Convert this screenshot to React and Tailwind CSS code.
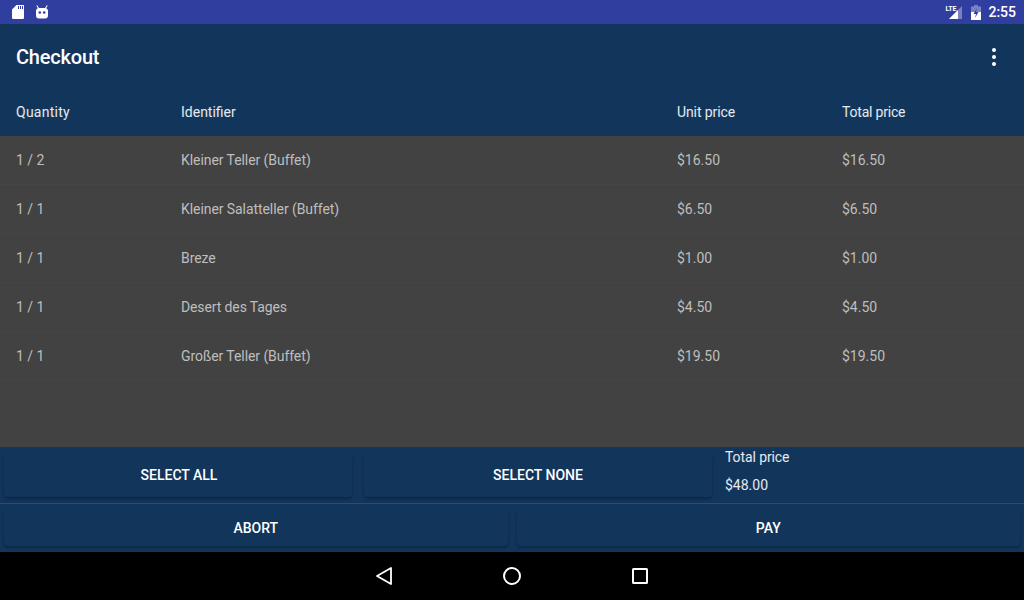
import React from "react";

const rows = [
  { qty: "1 / 2", name: "Kleiner Teller (Buffet)", unit: "$16.50", total: "$16.50" },
  { qty: "1 / 1", name: "Kleiner Salatteller (Buffet)", unit: "$6.50", total: "$6.50" },
  { qty: "1 / 1", name: "Breze", unit: "$1.00", total: "$1.00" },
  { qty: "1 / 1", name: <span className="tracking-[-0.12px]">Desert des Tages</span>, unit: "$4.50", total: "$4.50" },
  { qty: "1 / 1", name: "Großer Teller (Buffet)", unit: "$19.50", total: "$19.50" },
];

const Row = ({ cells, className }) => (
  <div className={`flex items-center pl-4 ${className}`}>
    <div className="w-[165px]">{cells[0]}</div>
    <div className="w-[496px]">{cells[1]}</div>
    <div className="w-[165px]">{cells[2]}</div>
    <div className="flex-1">{cells[3]}</div>
  </div>
);

const FlatButton = ({ label, className }) => (
  <button
    type="button"
    className={`flex h-full items-center justify-center rounded-sm bg-[#12355b] text-sm font-medium text-white shadow-[0_2px_3px_rgba(0,0,0,0.25)] ${className}`}
  >
    {label}
  </button>
);

const StatusBar = () => (
  <div className="flex h-6 items-center justify-between bg-[#303f9f] pl-3 pr-2 text-white">
    <div className="flex items-center gap-[12px]">
      <svg width="12" height="14" viewBox="0 0 12 14" fill="#fff">
        <path d="M4.5 0H10.5A1.2 1.2 0 0 1 12 1.3V12.7A1.2 1.2 0 0 1 10.8 14H1.2A1.2 1.2 0 0 1 0 12.7V4.5ZM6 1V4H7V1ZM8 1V4H9V1ZM10 1V4H11V1Z" fillRule="evenodd" />
      </svg>
      <svg width="12" height="14" viewBox="0 0 12 14" fill="#fff">
        <path d="M1 0L3 3H9L11 0L11.6 .5L10.2 3.2A3 3 0 0 1 12 6V10.5A3 3 0 0 1 9 13.5H3A3 3 0 0 1 0 10.5V6A3 3 0 0 1 1.8 3.2L.4 .5Z" />
        <circle cx="3.8" cy="7.5" r="1.3" fill="#303f9f" />
        <circle cx="8.2" cy="7.5" r="1.3" fill="#303f9f" />
      </svg>
    </div>
    <div className="flex items-center">
      <div className="relative h-[15px] w-[17px]">
        <span className="absolute left-0 top-0 text-[7px] font-bold leading-[8px] tracking-[-0.2px]">LTE</span>
        <svg className="absolute bottom-[1px] left-[4px]" width="13" height="13" viewBox="0 0 13 13">
          <path d="M13 0V13H0Z" fill="#fff" fillOpacity="0.35" />
          <path d="M9 4V13H0Z" fill="#fff" />
        </svg>
      </div>
      <svg className="ml-[9px]" width="10" height="15" viewBox="0 0 10 15">
        <path d="M3 0H7V1.5H10V15H0V1.5H3Z" fill="#fff" fillOpacity="0.35" />
        <path d="M0 7H10V15H0Z" fill="#fff" />
        <path d="M6 3L2.5 9H5L4 13L7.5 7H5Z" fill="#303f9f" />
      </svg>
      <span className="ml-[7px] text-sm font-medium leading-none">2:55</span>
    </div>
  </div>
);

const NavBar = () => (
  <div className="flex h-12 items-center justify-center gap-[104px] bg-black">
    <svg width="24" height="24" viewBox="0 0 24 24" fill="none" stroke="#fff" strokeWidth="1.8" strokeLinejoin="round">
      <path d="M19 4V20L5 12Z" />
    </svg>
    <svg width="24" height="24" viewBox="0 0 24 24" fill="none" stroke="#fff" strokeWidth="2">
      <circle cx="12" cy="12" r="8" />
    </svg>
    <svg width="24" height="24" viewBox="0 0 24 24" fill="none" stroke="#fff" strokeWidth="2" strokeLinejoin="round">
      <rect x="5" y="5" width="14" height="14" rx="0.5" />
    </svg>
  </div>
);

const App = () => {
  return (
    <div className="flex h-[600px] w-[1024px] flex-col overflow-hidden bg-[#424242] font-['Roboto',sans-serif]">
      <StatusBar />

      <div className="flex h-16 items-center justify-between bg-[#12355b] pl-4 pr-7 pt-[2px]">
        <h1 className="text-xl font-medium tracking-[-0.2px] text-white">Checkout</h1>
        <div className="flex flex-col gap-[3px]">
          <span className="h-1 w-1 rounded-full bg-white" />
          <span className="h-1 w-1 rounded-full bg-white" />
          <span className="h-1 w-1 rounded-full bg-white" />
        </div>
      </div>

      <Row
        cells={[
          <span className="tracking-[0.25px]">Quantity</span>,
          "Identifier",
          <span className="tracking-[-0.1px]">Unit price</span>,
          <span className="tracking-[-0.2px]">Total price</span>,
        ]}
        className="h-12 bg-[#12355b] text-sm text-white/90"
      />

      <div className="flex-1">
        {rows.map((r, i) => (
          <Row
            key={i}
            cells={[
              r.qty,
              <span className="tracking-[-0.07px]">{r.name}</span>,
              r.unit,
              r.total,
            ]}
            className="h-[49px] border-b border-[#454548] text-sm text-[#bebebe]"
          />
        ))}
      </div>

      <div className="flex h-[57px] border-b border-[#3d4854] bg-[#12355b] px-1 py-[6px]">
        <FlatButton label="SELECT ALL" className="w-[348px] pl-[2px]" />
        <FlatButton label="SELECT NONE" className="ml-3 w-[348px]" />
        <div className="-my-[6px] ml-[13px] flex flex-col text-sm text-white/90">
          <span className="tracking-[-0.1px]">Total price</span>
          <span className="mt-2">$48.00</span>
        </div>
      </div>

      <div className="flex h-12 gap-[9px] bg-[#12355b] px-1 py-[6px]">
        <FlatButton label="ABORT" className="flex-1" />
        <FlatButton label="PAY" className="flex-1" />
      </div>

      <NavBar />
    </div>
  );
};

export default App;
